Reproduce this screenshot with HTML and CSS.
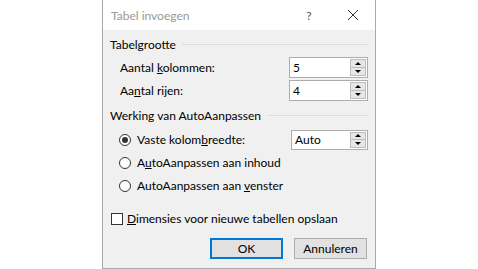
FILE: index.html
```html
<!DOCTYPE html>
<html>
<head>
  <meta charset="utf-8">
  <title>Tabel invoegen</title>
  <link rel="stylesheet" href="styles.css">
</head>
<body>
  <div class="dialoog">
    <div class="titelbalk">
      <span class="titel">Tabel invoegen</span>
      <span class="help">?</span>
      <span class="sluiten">
        <svg width="12" height="12" viewBox="0 0 12 12"><path d="M1 1L11 11M11 1L1 11" stroke="#333" stroke-width="1" fill="none"/></svg>
      </span>
    </div>

    <div class="inhoud">
      <div class="kop m4"><span>Tabelgrootte</span><i class="lijn"></i></div>

      <div class="rij m2">
        <span class="label">Aantal <u>k</u>olommen:</span>
        <div class="spin"><span class="waarde">5</span><div class="knoppen"><b class="op"></b><b class="neer"></b></div></div>
      </div>
      <div class="rij m2">
        <span class="label">Aa<u>n</u>tal rijen:</span>
        <div class="spin"><span class="waarde">4</span><div class="knoppen"><b class="op"></b><b class="neer"></b></div></div>
      </div>

      <div class="kop m4"><span>Werking van AutoAanpassen</span><i class="lijn"></i></div>

      <div class="rij m3">
        <span class="keuze"><i class="radio aan"></i><span>Vaste kolom<u>b</u>reedte:</span></span>
        <div class="spin smal"><span class="waarde">Auto</span><div class="knoppen"><b class="op"></b><b class="neer"></b></div></div>
      </div>
      <div class="rij m2">
        <span class="keuze"><i class="radio"></i><span>A<u>u</u>toAanpassen aan inhoud</span></span>
      </div>
      <div class="rij m2">
        <span class="keuze"><i class="radio"></i><span>AutoAanpassen aan <u>v</u>enster</span></span>
      </div>

      <div class="rij m12">
        <span class="vinkje"><i class="vak"></i><span><u>D</u>imensies voor nieuwe tabellen opslaan</span></span>
      </div>

      <div class="knoppenbalk">
        <button class="knop standaard">OK</button>
        <button class="knop">Annuleren</button>
      </div>
    </div>
  </div>
</body>
</html>
```

FILE: styles.css
```css
* {
  box-sizing: border-box;
}

body {
  margin: 0;
  background-color: #fff;
  font-family: Lato, "Noto Sans", Arial, sans-serif;
  font-size: 12px;
  color: #000;
}

.dialoog {
  width: 274px;
  height: 269px;
  margin: 0 auto;
  border: 1px solid #a9a9a9;
  border-top: none;
  background-color: #f0f0f0;
  display: flex;
  flex-direction: column;
}

.titelbalk {
  height: 30px;
  background-color: #fff;
  display: flex;
  align-items: center;
  padding-left: 8px;
}
.titel {
  flex-grow: 1;
  color: #999;
}
.help {
  width: 20px;
  text-align: center;
  color: #555;
  margin-right: 24px;
}
.sluiten {
  width: 20px;
  display: flex;
  justify-content: center;
  margin-right: 12px;
}

.inhoud {
  padding: 0 7px 0 7px;
  display: flex;
  flex-direction: column;
}

.m2 { margin-top: 2px; }
.m3 { margin-top: 3px; }
.m4 { margin-top: 4px; }
.m12 { margin-top: 12px; }

.kop {
  height: 21px;
  display: flex;
  align-items: center;
}
.lijn {
  flex-grow: 1;
  height: 1px;
  background-color: #dcdcdc;
  margin-left: 6px;
}

.rij {
  height: 21px;
  display: flex;
  align-items: center;
  justify-content: space-between;
}
.label {
  padding-left: 10px;
}
.keuze, .vinkje {
  display: flex;
  align-items: center;
  padding-left: 9px;
}
.vinkje {
  padding-left: 1px;
}

.radio {
  width: 12px;
  height: 12px;
  border: 1px solid #333;
  border-radius: 50%;
  margin-right: 6px;
  background-color: #fff;
  display: flex;
  align-items: center;
  justify-content: center;
}
.radio.aan::after {
  content: "";
  width: 6px;
  height: 6px;
  border-radius: 50%;
  background-color: #333;
}

.vak {
  width: 12px;
  height: 12px;
  border: 1px solid #333;
  background-color: #fff;
  margin-right: 4px;
}

.spin {
  width: 79px;
  height: 21px;
  border: 1px solid #adadad;
  background-color: #fff;
  display: flex;
  align-items: center;
  padding: 1px;
}
.spin.smal {
  width: 77px;
  height: 20px;
}
.waarde {
  flex-grow: 1;
  padding-left: 2px;
}
.knoppen {
  width: 16px;
  height: 100%;
  display: flex;
  flex-direction: column;
}
.knoppen b {
  flex-grow: 1;
  border: 1px solid #bdbdbd;
  background-color: #e6e6e6;
  display: flex;
  align-items: center;
  justify-content: center;
}
.knoppen b + b {
  border-top: none;
}
.knoppen b::after {
  content: "";
  border-left: 3px solid transparent;
  border-right: 3px solid transparent;
}
.op::after {
  border-bottom: 3px solid #000;
}
.neer::after {
  border-top: 3px solid #000;
}

.knoppenbalk {
  margin-top: 9px;
  display: flex;
  justify-content: flex-end;
  gap: 11px;
  padding-right: 1px;
}
.knop {
  width: 73px;
  height: 21px;
  border: 1px solid #adadad;
  background-color: #e1e1e1;
  font-family: inherit;
  font-size: 12px;
  color: #000;
  padding: 0;
}
.knop.standaard {
  border: 2px solid #0078d7;
}
```
